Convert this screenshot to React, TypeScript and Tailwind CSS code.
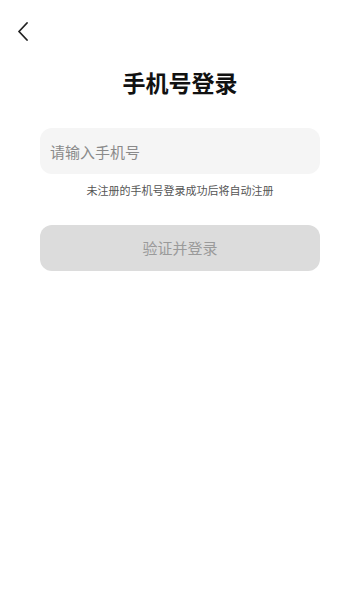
import React from 'react';

const App: React.FC = () => {
  return (
    <div
      className="w-[360px] h-[600px] bg-white flex flex-col"
      style={{ fontFamily: '"Noto Sans CJK SC", "Noto Sans", sans-serif' }}
    >
      <div className="h-[59px] pl-[16px] pt-[21px]">
        <svg width="14" height="20" viewBox="0 0 14 20" fill="none">
          <path d="M11 2 L3 10.5 L11 19" stroke="#222" strokeWidth="1.8" strokeLinecap="round" strokeLinejoin="round" />
        </svg>
      </div>

      <h1 className="text-center text-[23px] leading-[46px] font-bold text-[#111]">手机号登录</h1>

      <div className="px-[40px] mt-[23px]">
        <input
          type="tel"
          placeholder="请输入手机号"
          className="w-full h-[46px] rounded-[12px] bg-[#f5f5f5] px-[10px] text-[15px] text-[#333] placeholder:text-[#8a8a8a] outline-none"
        />
        <p className="text-center text-[11px] text-[#555] mt-[8px] leading-[16px]">未注册的手机号登录成功后将自动注册</p>

        <button className="w-full h-[46px] mt-[27px] rounded-[12px] bg-[#dcdcdc] text-[15px] text-[#9a9a9a]">
          验证并登录
        </button>
      </div>
    </div>
  );
};

export default App;
